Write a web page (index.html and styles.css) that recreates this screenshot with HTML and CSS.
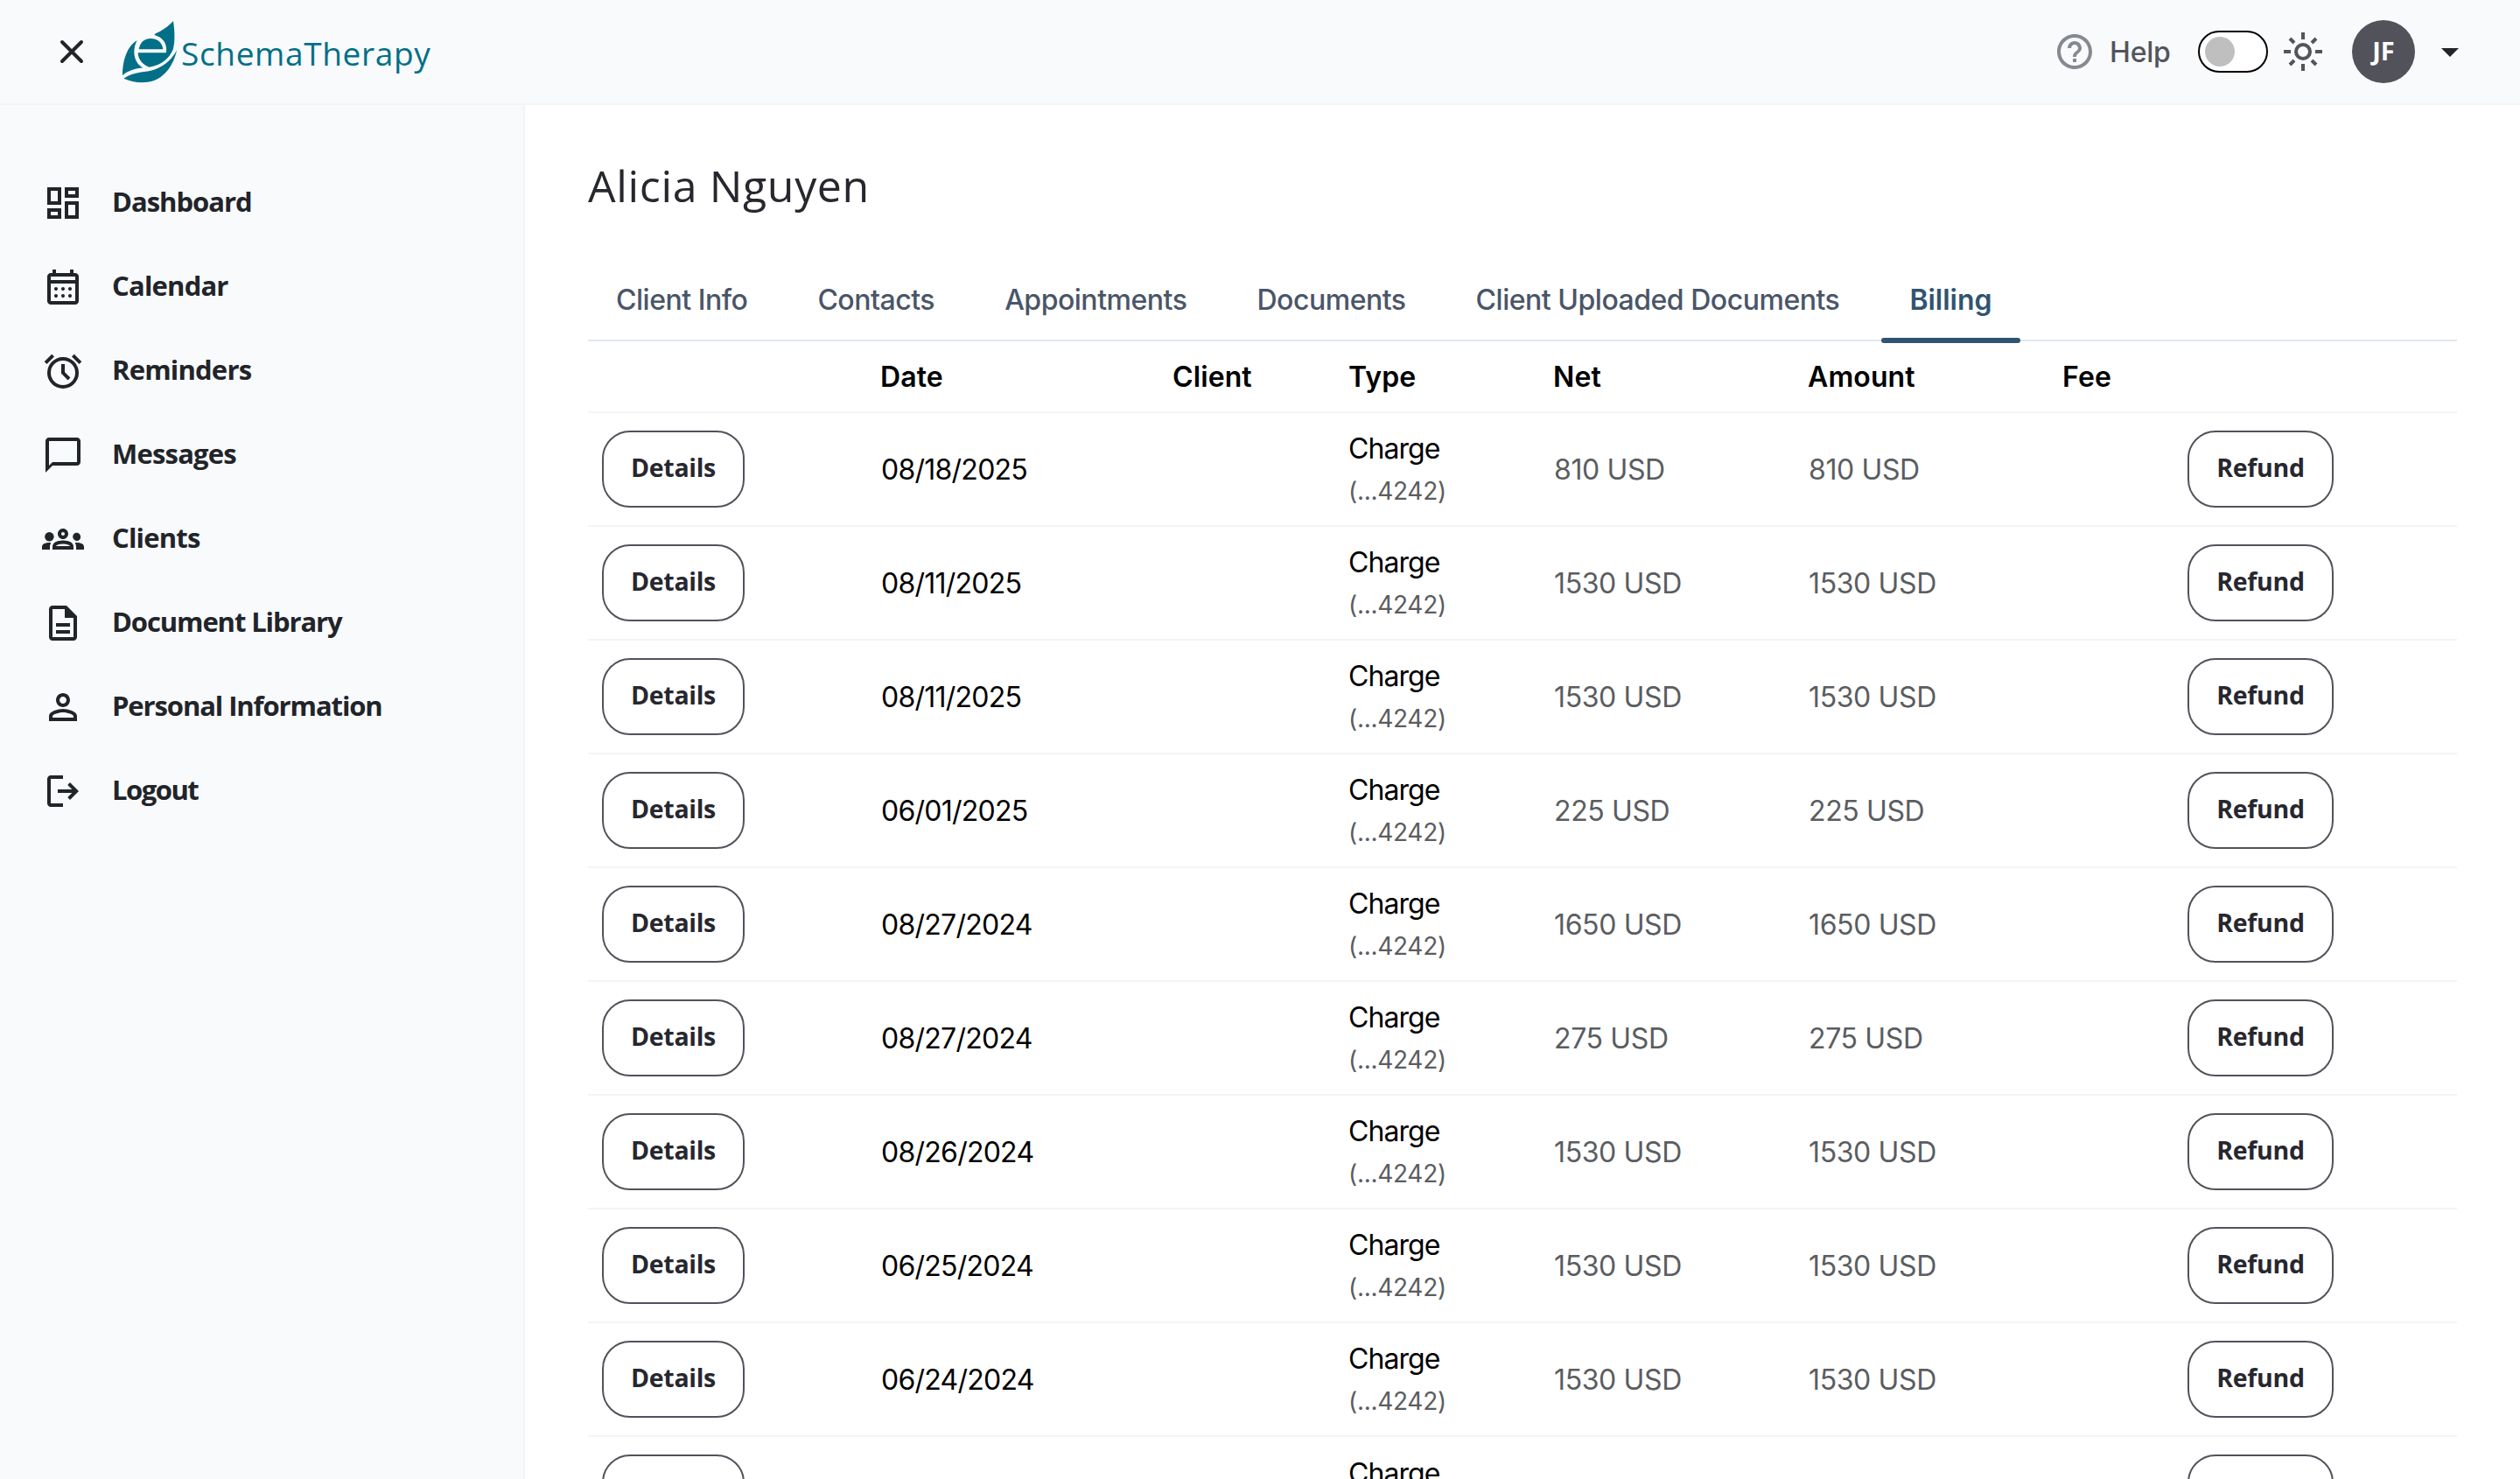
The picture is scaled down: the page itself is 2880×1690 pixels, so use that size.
FILE: index.html
```html
<!DOCTYPE html>
<html lang="en">
<head>
<meta charset="utf-8">
<title>eSchemaTherapy – Billing</title>
<link rel="stylesheet" href="styles.css">
</head>
<body>
<header class="topbar">
  <svg class="close" viewBox="0 0 28 28"><path d="M3 3 25 25M25 3 3 25"/></svg>
  <div class="logo">
    <svg class="logo-mark" viewBox="0 0 186 210">
      <path d="M174 0C180 40 180 75 173 98C160 128 135 150 92 158C68 150 54 132 53 109H150C154 78 140 56 109 48C112 42 120 40 128 36C146 26 162 14 174 0Z"/>
      <path d="M56 97C60 72 76 60 97 60C118 60 136 72 139 97Z"/>
      <path d="M50 67C20 82 0 130 0 187C18 170 45 163 70 160C42 146 30 104 50 67Z"/>
      <path d="M4 197C40 172 80 178 112 166C150 150 172 128 186 100C176 150 142 206 80 210C50 212 25 206 4 197Z"/>
    </svg>
    <span class="logo-text">SchemaTherapy</span>
  </div>
  <div class="tools">
    <svg class="help-icon" viewBox="0 0 24 24"><path d="M11 18h2v-2h-2zm1-16C6.480 2 2 6.480 2 12s4.480 10 10 10 10-4.480 10-10S17.520 2 12 2m0 18c-4.410 0-8-3.590-8-8s3.590-8 8-8 8 3.590 8 8-3.590 8-8 8m0-14c-2.210 0-4 1.790-4 4h2c0-1.100.9-2 2-2s2 .9 2 2c0 2-3 1.750-3 5h2c0-2.250 3-2.500 3-5 0-2.210-1.790-4-4-4"/></svg>
    <span class="help">Help</span>
    <span class="toggle"><span class="knob"></span></span>
    <svg class="sun" viewBox="0 0 44 44"><circle cx="22" cy="22" r="8"/><path d="M22 0v8M22 36v8M0 22h8M36 22h8M7 7l5 5M32 32l5 5M7 37l5-5M32 12l5-5"/></svg>
    <span class="avatar">JF</span>
    <svg class="caret" viewBox="0 0 20 10"><path d="M0 0h20L10 10z"/></svg>
  </div>
</header>
<div class="shell">
  <nav class="sidebar">
    <a class="item dashboard"><svg viewBox="0 0 24 24"><path d="M19 5v2h-4V5zM9 5v6H5V5zm10 8v6h-4v-6zM9 17v2H5v-2zM21 3h-8v6h8zM11 3H3v10h8zm10 8h-8v10h8zm-10 4H3v6h8z"/></svg><span>Dashboard</span></a>
    <a class="item calendar"><svg viewBox="0 -960 960 960"><path d="M200-80q-33 0-56.500-23.500T120-160v-560q0-33 23.500-56.500T200-800h40v-80h80v80h320v-80h80v80h40q33 0 56.500 23.500T840-720v560q0 33-23.500 56.500T760-80H200Zm0-80h560v-400H200v400Zm0-480h560v-80H200v80Zm280 240q-17 0-28.500-11.500T440-440q0-17 11.500-28.500T480-480q17 0 28.500 11.500T520-440q0 17-11.500 28.500T480-400Zm-160 0q-17 0-28.500-11.500T280-440q0-17 11.500-28.500T320-480q17 0 28.500 11.500T360-440q0 17-11.500 28.500T320-400Zm320 0q-17 0-28.500-11.500T600-440q0-17 11.500-28.500T640-480q17 0 28.500 11.500T680-440q0 17-11.500 28.500T640-400ZM480-240q-17 0-28.500-11.500T440-280q0-17 11.500-28.500T480-320q17 0 28.500 11.500T520-280q0 17-11.500 28.500T480-240Zm-160 0q-17 0-28.500-11.500T280-280q0-17 11.500-28.500T320-320q17 0 28.500 11.500T360-280q0 17-11.500 28.500T320-240Zm320 0q-17 0-28.500-11.500T600-280q0-17 11.500-28.500T640-320q17 0 28.500 11.500T680-280q0 17-11.500 28.500T640-240Z"/></svg><span>Calendar</span></a>
    <a class="item reminders"><svg viewBox="0 -960 960 960"><path d="M480-80q-75 0-140.500-28.500t-114-77q-48.500-48.500-77-114T120-440q0-75 28.500-140.500t77-114q48.500-48.500 114-77T480-800q75 0 140.500 28.500t114 77q48.500 48.500 77 114T840-440q0 75-28.500 140.500t-77 114q-48.500 48.500-114 77T480-80Zm112-192 56-56-128-128v-184h-80v216l152 152ZM224-866l56 56-170 170-56-56 170-170Zm512 0 170 170-56 56-170-170 56-56ZM480-160q117 0 198.500-81.500T760-440q0-117-81.500-198.500T480-720q-117 0-198.500 81.500T200-440q0 117 81.500 198.500T480-160Z"/></svg><span>Reminders</span></a>
    <a class="item messages"><svg viewBox="0 0 24 24"><path d="M20 2H4c-1.100 0-2 .9-2 2v18l4-4h14c1.100 0 2-.9 2-2V4c0-1.100-.9-2-2-2m0 14H6l-2 2V4h16z"/></svg><span>Messages</span></a>
    <a class="item clients"><svg viewBox="0 0 24 24"><path d="M4 13c1.100 0 2-.9 2-2s-.9-2-2-2-2 .9-2 2 .9 2 2 2m1.130 1.100C4.760 14.040 4.390 14 4 14c-.99 0-1.930.21-2.780.58C.48 14.900 0 15.620 0 16.430V18h4.500v-1.610c0-.83.23-1.610.63-2.290M20 13c1.100 0 2-.9 2-2s-.9-2-2-2-2 .9-2 2 .9 2 2 2m4 3.430c0-.81-.48-1.530-1.220-1.850-.85-.37-1.790-.58-2.780-.58-.39 0-.76.04-1.130.1.400.68.630 1.460.630 2.290V18H24zm-7.760-2.780c-1.170-.52-2.610-.9-4.240-.9s-3.070.39-4.240.9C6.680 14.130 6 15.210 6 16.390V18h12v-1.610c0-1.180-.68-2.260-1.760-2.740M8.070 16c.09-.23.130-.39.910-.69.970-.38 1.990-.56 3.020-.56s2.050.18 3.020.56c.77.300.81.460.91.690zM12 8c.55 0 1 .45 1 1s-.45 1-1 1-1-.45-1-1 .45-1 1-1m0-2c-1.660 0-3 1.340-3 3s1.340 3 3 3 3-1.340 3-3-1.340-3-3-3"/><circle cx="4.200" cy="10.600" r="2.600"/><circle cx="19.800" cy="10.600" r="2.200"/></svg><span>Clients</span></a>
    <a class="item documents"><svg viewBox="0 0 24 24"><path d="M8 16h8v2H8zm0-4h8v2H8zm6-10H6c-1.100 0-2 .9-2 2v16c0 1.100.89 2 1.990 2H18c1.100 0 2-.9 2-2V8zm4 18H6V4h7v5h5z"/></svg><span>Document Library</span></a>
    <a class="item personal"><svg viewBox="0 0 24 24"><path d="M12 6c1.100 0 2 .9 2 2s-.9 2-2 2-2-.9-2-2 .9-2 2-2m0 9c2.700 0 5.800 1.290 6 2v1H6v-.99c.2-.72 3.300-2.010 6-2.010m0-11C9.790 4 8 5.790 8 8s1.790 4 4 4 4-1.790 4-4-1.790-4-4-4m0 9c-2.670 0-8 1.340-8 4v3h16v-3c0-2.660-5.330-4-8-4"/></svg><span>Personal Information</span></a>
    <a class="item logout"><svg viewBox="0 -960 960 960"><path d="M200-120q-33 0-56.500-23.500T120-200v-560q0-33 23.500-56.500T200-840h280v80H200v560h280v80H200Zm440-160-55-58 102-102H360v-80h327L585-622l55-58 200 200-200 200Z"/></svg><span>Logout</span></a>
  </nav>
  <main class="content">
    <h1>Alicia Nguyen</h1>
    <div class="tabs">
      <span class="tab">Client Info</span><span class="tab">Contacts</span><span class="tab">Appointments</span><span class="tab">Documents</span><span class="tab">Client Uploaded Documents</span><span class="tab active">Billing</span>
    </div>
    <div class="table">
      <div class="row head"><span></span><span>Date</span><span>Client</span><span>Type</span><span>Net</span><span>Amount</span><span>Fee</span><span></span></div>
      <div class="row"><span><button>Details</button></span><span class="date">08/18/2025</span><span></span><span class="type">Charge<small>(...4242)</small></span><span class="money">810 USD</span><span class="money">810 USD</span><span></span><span><button class="wide">Refund</button></span></div>
      <div class="row"><span><button>Details</button></span><span class="date">08/11/2025</span><span></span><span class="type">Charge<small>(...4242)</small></span><span class="money">1530 USD</span><span class="money">1530 USD</span><span></span><span><button class="wide">Refund</button></span></div>
      <div class="row"><span><button>Details</button></span><span class="date">08/11/2025</span><span></span><span class="type">Charge<small>(...4242)</small></span><span class="money">1530 USD</span><span class="money">1530 USD</span><span></span><span><button class="wide">Refund</button></span></div>
      <div class="row"><span><button>Details</button></span><span class="date">06/01/2025</span><span></span><span class="type">Charge<small>(...4242)</small></span><span class="money">225 USD</span><span class="money">225 USD</span><span></span><span><button class="wide">Refund</button></span></div>
      <div class="row"><span><button>Details</button></span><span class="date">08/27/2024</span><span></span><span class="type">Charge<small>(...4242)</small></span><span class="money">1650 USD</span><span class="money">1650 USD</span><span></span><span><button class="wide">Refund</button></span></div>
      <div class="row"><span><button>Details</button></span><span class="date">08/27/2024</span><span></span><span class="type">Charge<small>(...4242)</small></span><span class="money">275 USD</span><span class="money">275 USD</span><span></span><span><button class="wide">Refund</button></span></div>
      <div class="row"><span><button>Details</button></span><span class="date">08/26/2024</span><span></span><span class="type">Charge<small>(...4242)</small></span><span class="money">1530 USD</span><span class="money">1530 USD</span><span></span><span><button class="wide">Refund</button></span></div>
      <div class="row"><span><button>Details</button></span><span class="date">06/25/2024</span><span></span><span class="type">Charge<small>(...4242)</small></span><span class="money">1530 USD</span><span class="money">1530 USD</span><span></span><span><button class="wide">Refund</button></span></div>
      <div class="row"><span><button>Details</button></span><span class="date">06/24/2024</span><span></span><span class="type">Charge<small>(...4242)</small></span><span class="money">1530 USD</span><span class="money">1530 USD</span><span></span><span><button class="wide">Refund</button></span></div>
      <div class="row"><span><button></button></span><span></span><span></span><span class="type">Charge<small></small></span><span></span><span></span><span></span><span><button class="wide"></button></span></div>
    </div>
  </main>
</div>
</body>
</html>
```

FILE: styles.css
```css
* { box-sizing: border-box; }
html, body { margin: 0; height: 1690px; overflow: hidden; }
body { display: flex; flex-direction: column; background: #fff; color: #000; font: 32px/48px Inter, "Liberation Sans", sans-serif; }

.topbar { flex: none; height: 120px; display: flex; align-items: center; padding: 0 70px 0 68px; background: #f9fafc; border-bottom: 2px solid #f3f4f6; }
.close { width: 28px; height: 28px; overflow: visible; fill: none; stroke: #212429; stroke-width: 4; stroke-linecap: round; }
.logo { display: flex; align-items: center; margin-left: 44px; }
.logo-mark { width: 62px; height: 70px; overflow: visible; fill: #006f87; }
.logo-text { margin-left: 5px; padding-top: 4px; color: #006f87; font: 37px/48px "Open Sans", sans-serif; letter-spacing: .65px; }
.tools { display: flex; align-items: center; margin-left: auto; }
.help-icon { width: 48px; height: 48px; fill: #868991; }
.help { width: 101px; margin-left: 16px; padding-top: 2px; color: #53545c; font-weight: 500; letter-spacing: -.2px; }
.toggle { width: 80px; height: 48px; padding: 5px 6px; border: 2px solid #000; border-radius: 24px; background: #fff; }
.knob { display: block; width: 34px; height: 34px; border-radius: 50%; background: #bfbfbf; }
.sun { width: 44px; height: 44px; margin-left: 18px; fill: none; stroke: #53545c; stroke-width: 4; }
.avatar { width: 72px; height: 72px; margin: 0 30px 0 34px; border-radius: 50%; background: #52525b; color: #fff; font: 700 29px/69px "Open Sans", sans-serif; text-align: center; }
.caret { width: 20px; height: 10px; margin-top: 2px; fill: #212429; }

.shell { flex: 1; display: flex; min-height: 0; }
.sidebar { flex: none; width: 600px; padding-top: 64px; background: #f9fafc; border-right: 2px solid #f3f4f6; }
.item { display: flex; align-items: center; height: 96px; padding-left: 48px; color: #212429; font: 700 31px/44px "Open Sans", sans-serif; letter-spacing: -.8px; }
.item svg { width: 48px; height: 48px; margin-right: 32px; fill: currentColor; }
.item span { padding-bottom: 4px; }
.dashboard { letter-spacing: -1px; }
.documents, .personal { letter-spacing: -1.1px; }
.logout { letter-spacing: -1.5px; }

.content { flex: 1; padding: 56px 72px 0; overflow: hidden; }
h1 { height: 72px; margin: 0 0 48px; color: #27272f; font: 400 50px/72px "Open Sans", sans-serif; letter-spacing: .65px; }
.tabs { display: flex; gap: 16px; height: 94px; border-bottom: 2px solid #e2e8f0; color: #4a5568; font-weight: 500; letter-spacing: -.48px; }
.tab { height: 92px; padding: 0 32px; line-height: 94px; }
.tab.active { position: relative; color: #2f5472; font-weight: 600; letter-spacing: 0; }
.tab.active::after { content: ""; position: absolute; left: 0; right: 0; bottom: -4px; height: 6px; border-radius: 3px; background: #2f5472; }

.row { display: grid; grid-template-columns: 318px 334px 201px 234px 291px 291px 143px 324px; align-items: center; height: 130px; border-bottom: 2px solid #f3f4f5; }
.row > span { padding-left: 16px; }
.row.head { height: 82px; padding-top: 2px; font-weight: 600; letter-spacing: .1px; }
.row > .date { padding: 2px 0 0 17px; letter-spacing: -.75px; }
.type { padding-top: 3px; letter-spacing: -.95px; }
.row > .money { padding: 2px 0 0 17px; color: #5a5d61; letter-spacing: -.37px; }
small { display: block; min-height: 48px; color: #5a5d61; font-size: 28px; line-height: 49px; letter-spacing: -.3px; }
button { display: block; width: 163px; height: 88px; padding: 0 0 4px; border: 2px solid #52525b; border-radius: 32px; background: #fff; color: #27272f; font: 700 28.5px/40px "Open Sans", sans-serif; letter-spacing: -.3px; white-space: nowrap; }
.wide { width: 167px; }
```
